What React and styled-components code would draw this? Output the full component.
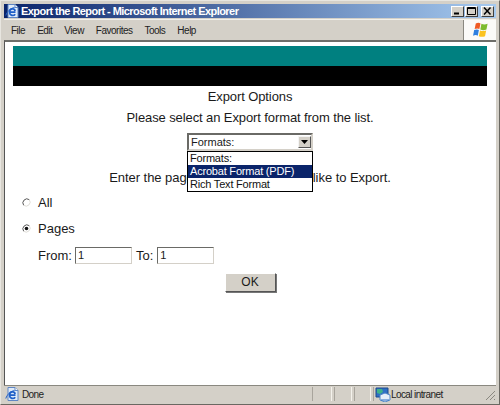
import styled, { createGlobalStyle } from "styled-components";

const GlobalStyle = createGlobalStyle`
  html, body { margin: 0; padding: 0; background: #d4d0c8; }
  body { font-family: "Liberation Sans", Arial, sans-serif; }
`;

const Window = styled.div`
  width: 500px;
  height: 405px;
  box-sizing: border-box;
  padding: 3px 3px 2px;
  background: #d4d0c8;
  border: 1px solid #6a6862;
  border-top-color: #e8e6e0;
  border-left-color: #e8e6e0;
  display: flex;
  flex-direction: column;
  overflow: hidden;
`;

const TitleBar = styled.div`
  height: 14px;
  display: flex;
  align-items: center;
  gap: 2px;
  padding: 0 2px 0 1px;
  background: linear-gradient(90deg, #0a246a 0%, #a6caf0 100%);
  color: #fff;
  flex: none;
`;

const TitleText = styled.span`
  flex: 1;
  font: bold 11px "Liberation Sans", sans-serif;
  letter-spacing: -0.55px;
  white-space: nowrap;
`;

const CaptionButton = styled.div`
  width: 13px;
  height: 11px;
  margin-left: ${(p) => (p.$gap ? "1px" : "-1px")};
  background: #d4d0c8;
  box-sizing: border-box;
  border: 1px solid #404040;
  border-top-color: #fff;
  border-left-color: #fff;
  display: flex;
  align-items: center;
  justify-content: center;
`;

const MenuBar = styled.div`
  height: 21px;
  margin-top: 1px;
  display: flex;
  align-items: center;
  flex: none;
  border-top: 1px solid #f2f0ea;
  box-sizing: border-box;
`;

const MenuItem = styled.span`
  font: 10px "Liberation Sans", sans-serif;
  letter-spacing: -0.5px;
  color: #222;
  margin-right: 12px;
`;

const Menus = styled.div`
  flex: 1;
  display: flex;
  padding-left: 7px;
`;

const LogoBox = styled.div`
  width: 33px;
  height: 100%;
  box-sizing: border-box;
  border-left: 1px solid #8a8880;
  background: #fbfaf8;
  display: flex;
  align-items: center;
  justify-content: center;
`;

const Page = styled.main`
  flex: 1;
  position: relative;
  background: #fff;
  border-top: 2px solid #6e6e6a;
  border-left: 1px solid #555;
  min-height: 0;
  padding: 4px 9px 0 8px;
  color: #1a1a1a;
  font-size: 13px;
`;

const Banner = styled.div`
  height: 20px;
  background: ${(p) => p.$color};
`;

const CenterLine = styled.div`
  text-align: center;
  line-height: 16px;
  letter-spacing: ${(p) => p.$track ?? -0.1}px;
  margin-top: ${(p) => p.$top}px;
  white-space: nowrap;
`;

const SelectBox = styled.div`
  width: 126px;
  height: 18px;
  margin: 7px auto 0;
  box-sizing: border-box;
  border: 2px solid #6a6a66;
  border-right-color: #d4d0c8;
  border-bottom-color: #d4d0c8;
  display: flex;
  align-items: center;
  justify-content: space-between;
  padding-left: 2px;
  font-size: 11px;
`;

const ArrowButton = styled.div`
  width: 13px;
  height: 12px;
  box-sizing: border-box;
  background: #d4d0c8;
  border: 1px solid #555;
  border-top-color: #f4f4f4;
  border-left-color: #f4f4f4;
  display: flex;
  align-items: center;
  justify-content: center;
`;

const DropList = styled.div`
  position: absolute;
  left: 182px;
  top: 109px;
  width: 126px;
  height: 41px;
  box-sizing: border-box;
  border: 1px solid #000;
  background: #fff;
  z-index: 2;
`;

const DropItem = styled.div`
  height: 13px;
  line-height: 13px;
  padding-left: 2px;
  font-size: 11px;
  letter-spacing: -0.2px;
  color: ${(p) => (p.$active ? "#fff" : "#111")};
  background: ${(p) => (p.$active ? "#0a246a" : "transparent")};
`;

const RadioRow = styled.label`
  display: flex;
  align-items: center;
  gap: 7px;
  height: 16px;
  margin-top: ${(p) => p.$top}px;
  padding-left: 9px;
`;

const RangeRow = styled.div`
  display: flex;
  align-items: center;
  height: 17px;
  margin-top: 11px;
  padding-left: 25px;
`;

const RangeLabel = styled.span`
  margin-right: ${(p) => p.$gap}px;
`;

const PageInput = styled.div`
  width: 57px;
  height: 17px;
  box-sizing: border-box;
  border: 1px solid #6a6a66;
  border-right-color: #d4d0c8;
  border-bottom-color: #d4d0c8;
  margin-right: ${(p) => p.$gap}px;
  padding-left: 2px;
  line-height: 15px;
  font-size: 11px;
`;

const OkButton = styled.div`
  width: 51px;
  height: 19px;
  margin: 9px auto 0;
  box-sizing: border-box;
  background: #d4d0c8;
  border: 1px solid #555;
  border-top-color: #fff;
  border-left-color: #fff;
  box-shadow: 1px 1px 0 #777;
  text-align: center;
  line-height: 17px;
  font-size: 12px;
`;

const StatusBar = styled.footer`
  height: 16px;
  flex: none;
  display: flex;
  align-items: center;
  border-top: 1px solid #8a8880;
  font: 10px "Liberation Sans", sans-serif;
  letter-spacing: -0.6px;
  color: #222;
`;

const StatusMain = styled.div`
  flex: 1;
  display: flex;
  align-items: center;
  gap: 3px;
  padding-left: 1px;
`;

const StatusCell = styled.div`
  width: ${(p) => p.$w}px;
  height: 14px;
  box-sizing: border-box;
  border-left: 1px solid #a8a49c;
  border-right: 1px solid #f4f2ec;
  margin-right: 2px;
`;

const ZoneCell = styled.div`
  width: 123px;
  height: 14px;
  display: flex;
  align-items: center;
  box-sizing: border-box;
  border-left: 1px solid #a8a49c;
  padding-left: 1px;
  position: relative;
`;

const Grip = styled.svg`
  position: absolute;
  right: 0;
  bottom: 0;
`;

const IeIcon = () => (
  <svg width="14" height="14" viewBox="0 0 14 14">
    <path d="M3 .5h7l3 3v10H3z" fill="#dfeaf8" stroke="#5f86c4" />
    <path d="M10 .5v3h3" fill="#fff" stroke="#5f86c4" />
    <path d="M10.500 8.200H4.800a2.700 2.700 0 0 1 5.300-1.200M10.200 10.200a3.200 3.200 0 0 1-5.700-1.700" fill="none" stroke="#1f5fc8" strokeWidth="1.800" />
    <path d="M.8 11.500C2 7.500 6 4 9.500 3.500" fill="none" stroke="#1f5fc8" />
  </svg>
);

const WinLogo = () => (
  <svg width="17" height="16" viewBox="0 0 18 16">
    <path d="M4 1q3-1.500 5 0L7.800 7q-2-1.300-5 0z" fill="#ef5a24" />
    <path d="M10 1.500q3 1.300 6.500 0l-1.200 6q-3.300 1.300-6.500 0z" fill="#7dbb2e" />
    <path d="M2.300 8q3-1.300 5 0l-1.200 6q-2-1.300-5 0z" fill="#2f7fe0" />
    <path d="M8.500 8.500q3 1.300 6.500 0l-1.200 6q-3.300 1.300-6.500 0z" fill="#fbc21e" />
  </svg>
);

const ZoneIcon = () => (
  <svg width="16" height="15" viewBox="0 0 16 15">
    <path d="M1 1h12v9H1z" fill="#2f6fc4" stroke="#1d4a8c" />
    <path d="M2 2h5l1 3-3 2-3-1z" fill="#3fb28a" />
    <path d="M5 8l5-2 5 2v5l-5 2-5-2z" fill="#e6eef8" stroke="#4f86c8" />
    <path d="M6 13h8" stroke="#2f6fc4" />
  </svg>
);

const CaptionGlyph = ({ kind }) => (
  <svg width="9" height="8" viewBox="0 0 9 8" fill="none" stroke="#000">
    {kind === "min" && <path d="M1 6.500h5" strokeWidth="2" />}
    {kind === "max" && <path d="M0.500 1.500h8M0.500 0.500h8v7h-8z" />}
    {kind === "close" && <path d="M1 0.500l6.500 7M7.500 0.500l-6.500 7" strokeWidth="1.500" />}
  </svg>
);

const Radio = ({ checked }) => (
  <svg width="9" height="9" viewBox="0 0 9 9" fill="none">
    <circle cx="4.500" cy="4.500" r="4" fill="#fff" />
    <path d="M1.700 7.300a4 4 0 0 1 5.600-5.600" stroke="#555" />
    <path d="M7.300 1.700a4 4 0 0 1-5.600 5.600" stroke="#dedcd6" />
    {checked && <circle cx="4.500" cy="4.500" r="1.800" fill="#111" />}
  </svg>
);

export default function App() {
  return (
    <>
      <GlobalStyle />
      <Window>
        <TitleBar>
          <IeIcon />
          <TitleText>Export the Report - Microsoft Internet Explorer</TitleText>
          <CaptionButton><CaptionGlyph kind="min" /></CaptionButton>
          <CaptionButton><CaptionGlyph kind="max" /></CaptionButton>
          <CaptionButton $gap><CaptionGlyph kind="close" /></CaptionButton>
        </TitleBar>
        <MenuBar>
          <Menus>
            <MenuItem>File</MenuItem>
            <MenuItem>Edit</MenuItem>
            <MenuItem>View</MenuItem>
            <MenuItem>Favorites</MenuItem>
            <MenuItem>Tools</MenuItem>
            <MenuItem>Help</MenuItem>
          </Menus>
          <LogoBox><WinLogo /></LogoBox>
        </MenuBar>
        <Page>
          <Banner $color="#008080" />
          <Banner $color="#000" />
          <CenterLine $top={3}>Export Options</CenterLine>
          <CenterLine $top={5}>Please select an Export format from the list.</CenterLine>
          <SelectBox>
            Formats:
            <ArrowButton>
              <svg width="7" height="4" viewBox="0 0 7 4"><path d="M0 0h7L3.500 4z" fill="#000" /></svg>
            </ArrowButton>
          </SelectBox>
          <DropList>
            <DropItem>Formats:</DropItem>
            <DropItem $active>Acrobat Format (PDF)</DropItem>
            <DropItem>Rich Text Format</DropItem>
          </DropList>
          <CenterLine $top={19} $track={-0.05}>Enter the page numbers you would like to Export.</CenterLine>
          <RadioRow $top={8}>
            <Radio />
            All
          </RadioRow>
          <RadioRow $top={10}>
            <Radio checked />
            Pages
          </RadioRow>
          <RangeRow>
            <RangeLabel $gap={3}>From:</RangeLabel>
            <PageInput $gap={4}>1</PageInput>
            <RangeLabel $gap={4}>To:</RangeLabel>
            <PageInput>1</PageInput>
          </RangeRow>
          <OkButton>OK</OkButton>
        </Page>
        <StatusBar>
          <StatusMain><IeIcon />Done</StatusMain>
          <StatusCell $w={20} />
          <StatusCell $w={18} />
          <StatusCell $w={17} />
          <ZoneCell>
            <ZoneIcon />
            Local intranet
            <Grip width="12" height="12" viewBox="0 0 12 12" stroke="#8a8880">
              <path d="M11 2L2 11M11 6L6 11M11 10L10 11" />
            </Grip>
          </ZoneCell>
        </StatusBar>
      </Window>
    </>
  );
}
